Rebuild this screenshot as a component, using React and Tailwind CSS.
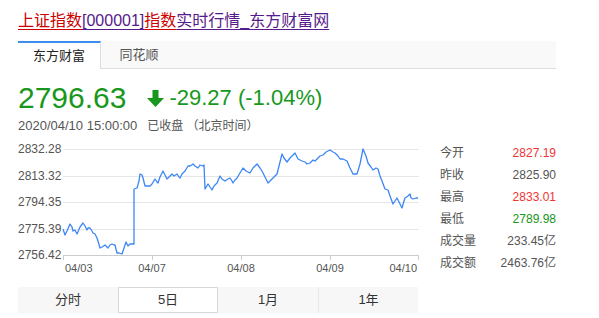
import React from "react";

const font = { fontFamily: '"Liberation Sans", "Noto Sans CJK SC", sans-serif' };

// 5-day line, page coordinates taken from the picture
const pts = [
  [63, 228], [65, 234], [67, 230], [70, 223], [72, 226], [73, 230], [75, 229], [77, 233], [80, 226], [83, 222],
  [85, 225], [87, 229], [88, 227], [90, 227], [92, 230], [93, 232], [95, 233], [97, 237], [98, 240], [100, 247],
  [102, 246], [105, 244], [107, 246], [108, 247], [110, 244], [112, 243], [114, 244], [115, 244], [117, 252],
  [119, 252], [122, 253], [124, 247], [126, 241], [128, 245], [130, 243], [133, 243], [134, 243], [134, 188],
  [137, 187], [139, 180], [140, 173], [142, 174], [143, 177], [145, 185], [148, 185], [150, 185], [152, 183],
  [155, 178], [157, 181], [158, 182], [160, 176], [163, 170], [165, 174], [167, 178], [169, 176], [172, 173],
  [174, 175], [177, 173], [179, 176], [180, 177], [182, 173], [185, 170], [188, 165], [190, 165], [193, 163],
  [195, 165], [198, 167], [200, 164], [203, 165], [204, 164], [205, 188], [208, 183], [210, 186], [212, 189],
  [214, 185], [217, 182], [220, 175], [222, 178], [225, 180], [228, 178], [230, 177], [232, 180], [233, 182],
  [235, 179], [237, 177], [240, 172], [243, 167], [246, 170], [250, 172], [253, 167], [257, 163], [260, 167],
  [262, 170], [265, 176], [268, 182], [272, 178], [277, 173], [279, 165], [282, 153], [284, 157], [287, 161],
  [290, 157], [292, 155], [295, 152], [298, 158], [302, 160], [305, 161], [307, 163], [310, 162], [313, 159],
  [315, 160], [317, 158], [320, 155], [323, 154], [326, 151], [330, 149], [333, 151], [335, 152], [338, 155],
  [340, 158], [343, 158], [347, 160], [350, 167], [353, 173], [357, 173], [360, 163], [363, 148], [366, 155],
  [368, 162], [371, 166], [373, 169], [376, 167], [378, 168], [380, 175], [382, 180], [385, 188], [388, 189],
  [390, 195], [393, 203], [395, 200], [397, 197], [400, 203], [402, 207], [404, 200], [405, 197], [408, 195],
  [410, 193], [411, 197], [413, 198], [416, 197], [418, 197],
];

const yLabels = [
  ["2832.28", 148],
  ["2813.32", 175],
  ["2794.35", 201],
  ["2775.39", 228],
  ["2756.42", 254],
];

const xLabels = [
  ["04/03", 47, "start"],
  ["04/07", 134, "middle"],
  ["04/08", 223, "middle"],
  ["04/09", 312, "middle"],
  ["04/10", 399, "end"],
];

const stats = [
  ["今开", "2827.19", "text-[#f03434]"],
  ["昨收", "2825.90", "text-[#555]"],
  ["最高", "2833.01", "text-[#f03434]"],
  ["最低", "2789.98", "text-[#16961a]"],
  ["成交量", "233.45亿", "text-[#555]"],
  ["成交额", "2463.76亿", "text-[#555]"],
];

const Chart = () => {
  // svg origin sits at page (18, 140)
  const line = pts.map(([x, y]) => `${x - 18},${y - 140}`).join(" ");
  return (
    <svg width="402" height="136" className="block" style={font}>
      {yLabels.map(([t, y], i) => (
        <g key={t}>
          <line x1="45" x2="401" y1={y - 140 + 0.5} y2={y - 140 + 0.5} stroke={i === 4 ? "#cccccc" : "#e6e6e6"} />
          <text x="0" y={y - 140 + 4} fontSize="12" fill="#555">{t}</text>
        </g>
      ))}
      {[45, 134, 223, 312, 400].map((x) => (
        <line key={x} x1={x + 0.5} x2={x + 0.5} y1="114" y2="119" stroke="#cccccc" />
      ))}
      {xLabels.map(([t, x, a]) => (
        <text key={t} x={x} y="131" fontSize="11" fill="#555" textAnchor={a}>{t}</text>
      ))}
      <polyline points={line} fill="none" stroke="#3d86f5" strokeWidth="1.3" strokeLinejoin="round" />
    </svg>
  );
};

export default function App() {
  return (
    <div className="w-[599px] h-[318px] bg-white overflow-hidden pl-[18px]" style={font}>
      <div className="pt-[11px] h-[41px] text-[16px] leading-[20px]">
        <a href="#" className="underline underline-offset-[3px] text-[#551a8b] decoration-[#551a8b]">
          <span className="text-[#cc0000] decoration-[#cc0000] underline">上证指数</span>
          [000001]
          <span className="text-[#cc0000] decoration-[#cc0000] underline">指数</span>
          实时行情_东方财富网
        </a>
      </div>

      <div className="flex w-[538px] h-[28px] bg-[#f9f9f9] border-b border-[#dddddd] text-[13px]">
        <div className="w-[83px] h-[28px] bg-white border-t-2 border-[#3d8ef0] border-r border-r-[#dddddd] flex items-center justify-center text-[#222]">
          东方财富
        </div>
        <div className="w-[76px] flex items-center justify-center text-[#555]">同花顺</div>
      </div>

      <div className="flex items-center h-[38px] mt-[10px] text-[#17981c]">
        <span className="text-[30px] leading-none">2796.63</span>
        <svg width="17" height="17" viewBox="0 0 17 17" className="ml-[21px] mr-[5px]">
          <path d="M5.5 0 H11.5 V8 H17 L8.5 17 L0 8 H5.5 Z" fill="#17981c" />
        </svg>
        <span className="text-[22px] leading-none">-29.27 (-1.04%)</span>
      </div>

      <div className="text-[#555] mt-[2px] h-[14px] flex items-center gap-[10px]">
        <span className="text-[13px]">2020/04/10 15:00:00</span>
        <span className="text-[12px]">已收盘 （北京时间）</span>
      </div>

      <div className="flex mt-[8px]">
        <Chart />
        <div className="ml-[20px] w-[116px] pt-[1px] text-[12px]">
          {stats.map(([k, v, c]) => (
            <div key={k} className="flex justify-between h-[22px] items-center">
              <span className="text-[#555]">{k}</span>
              <span className={c}>{v}</span>
            </div>
          ))}
        </div>
      </div>

      <div className="flex w-[400px] h-[26px] mt-[10px] bg-[#f7f7f7] text-[13px] text-[#333]">
        <div className="w-[100px] flex items-center justify-center">分时</div>
        <div className="w-[100px] flex items-center justify-center bg-white border border-[#d8d8d8]">5日</div>
        <div className="w-[100px] flex items-center justify-center">1月</div>
        <div className="w-[100px] flex items-center justify-center border-l border-[#e8e8e8]">1年</div>
      </div>
    </div>
  );
}
